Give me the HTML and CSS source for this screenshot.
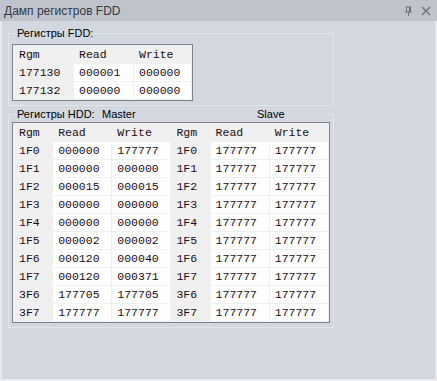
FILE: index.html
```html
<!DOCTYPE html>
<html lang="ru">
<head>
  <meta charset="UTF-8">
  <title>Дамп регистров FDD</title>
  <link rel="stylesheet" href="styles.css">
</head>
<body>
  <div class="window">
    <div class="titlebar">
      <span class="title">Дамп регистров FDD</span>
      <span class="tools">
        <svg width="9" height="10" viewBox="0 0 9 10"><path d="M2 1h5M2.5 1v5M6.5 1v5M1 6h7M4.5 6v4M5.5 1v5" stroke="#6b707a" stroke-width="1" fill="none"/></svg>
        <svg width="10" height="10" viewBox="0 0 10 10"><path d="M1 1l8 8M9 1l-8 8" stroke="#6b707a" stroke-width="1.3"/></svg>
      </span>
    </div>
    <div class="content">
      <fieldset class="group">
        <legend>Регистры FDD:</legend>
        <div class="grid-box">
          <table class="regs fdd">
            <tr class="head"><td class="rgm">Rgm</td><td>Read</td><td class="last">Write</td></tr>
            <tr><td class="rgm">177130</td><td>000001</td><td class="last">000000</td></tr>
            <tr><td class="rgm">177132</td><td>000000</td><td class="last">000000</td></tr>
          </table>
        </div>
      </fieldset>

      <fieldset class="group hdd-group">
        <legend><span class="lbl">Регистры HDD:</span><span class="master">Master</span><span class="slave">Slave</span></legend>
        <div class="grid-box">
          <table class="regs hdd">
            <tr class="head"><td class="rgm">Rgm</td><td>Read</td><td>Write</td><td class="rgm">Rgm</td><td>Read</td><td>Write</td></tr>
            <tr><td class="rgm">1F0</td><td>000000</td><td>177777</td><td class="rgm">1F0</td><td>177777</td><td>177777</td></tr>
            <tr><td class="rgm">1F1</td><td>000000</td><td>000000</td><td class="rgm">1F1</td><td>177777</td><td>177777</td></tr>
            <tr><td class="rgm">1F2</td><td>000015</td><td>000015</td><td class="rgm">1F2</td><td>177777</td><td>177777</td></tr>
            <tr><td class="rgm">1F3</td><td>000000</td><td>000000</td><td class="rgm">1F3</td><td>177777</td><td>177777</td></tr>
            <tr><td class="rgm">1F4</td><td>000000</td><td>000000</td><td class="rgm">1F4</td><td>177777</td><td>177777</td></tr>
            <tr><td class="rgm">1F5</td><td>000002</td><td>000002</td><td class="rgm">1F5</td><td>177777</td><td>177777</td></tr>
            <tr><td class="rgm">1F6</td><td>000120</td><td>000040</td><td class="rgm">1F6</td><td>177777</td><td>177777</td></tr>
            <tr><td class="rgm">1F7</td><td>000120</td><td>000371</td><td class="rgm">1F7</td><td>177777</td><td>177777</td></tr>
            <tr><td class="rgm">3F6</td><td>177705</td><td>177705</td><td class="rgm">3F6</td><td>177777</td><td>177777</td></tr>
            <tr><td class="rgm">3F7</td><td>177777</td><td>177777</td><td class="rgm">3F7</td><td>177777</td><td>177777</td></tr>
          </table>
        </div>
      </fieldset>
    </div>
  </div>
</body>
</html>
```

FILE: styles.css
```css
body {
  margin: 0;
  font-family: "DejaVu Sans", "Liberation Sans", sans-serif;
  font-size: 12px;
  background: #d3d7df;
}

.window {
  width: 437px;
  height: 381px;
  display: flex;
  flex-direction: column;
}

.titlebar {
  height: 21px;
  background: #bfc4cc;
  display: flex;
  align-items: center;
  justify-content: space-between;
  padding: 0 6px 0 4px;
  box-sizing: border-box;
  flex: none;
}

.title {
  color: #333a45;
  font-size: 12px;
  font-family: "Liberation Sans", sans-serif;
}

.tools {
  display: flex;
  gap: 8px;
  align-items: center;
}

.content {
  flex: 1;
  border-left: 2px solid #e6e8ee;
  border-right: 2px solid #e6e8ee;
  border-bottom: 2px solid #eceef2;
  padding: 0 0 0 6px;
}

.group {
  width: 326px;
  box-sizing: border-box;
  margin: 0;
  border: 1px solid #e2e5ea;
  padding: 5px 3px 1px 3px;
  margin-top: 6px;
}

.group legend {
  font-family: "Liberation Sans", sans-serif;
  font-size: 11px;
  color: #000;
  padding: 0 2px;
  margin-left: 3px;
}

.hdd-group {
  margin-top: 2px;
  padding-top: 2px;
  padding-bottom: 4px;
}

.hdd-group legend {
  display: flex;
  width: 310px;
  padding: 0;
  margin-left: 5px;
}

.lbl {
  width: 85px;
}

.master {
  width: 155px;
}

.slave {
  background: #d3d7df;
  padding-right: 2px;
}

.grid-box {
  display: inline-block;
  border: 1px solid #7d828c;
  background: #f0f0f0;
}

.hdd-group .grid-box {
  display: block;
  width: 316px;
}

.regs {
  border-collapse: collapse;
  font-family: "Liberation Mono", "Courier New", monospace;
  font-size: 11.5px;
  color: #1c0c14;
}

.regs td {
  background: #fff;
  height: 17px;
  padding: 0 0 0 5px;
  border: 1px solid #f0f0f0;
}

.regs .head td,
.regs td.rgm {
  background: #f0f0f0;
}

.fdd td {
  width: 54px;
}

.fdd td.rgm {
  width: 54px;
}

.fdd td.last {
  width: 52px;
}

.hdd td {
  width: 54px;
}

.hdd td.rgm {
  width: 34px;
}
```
